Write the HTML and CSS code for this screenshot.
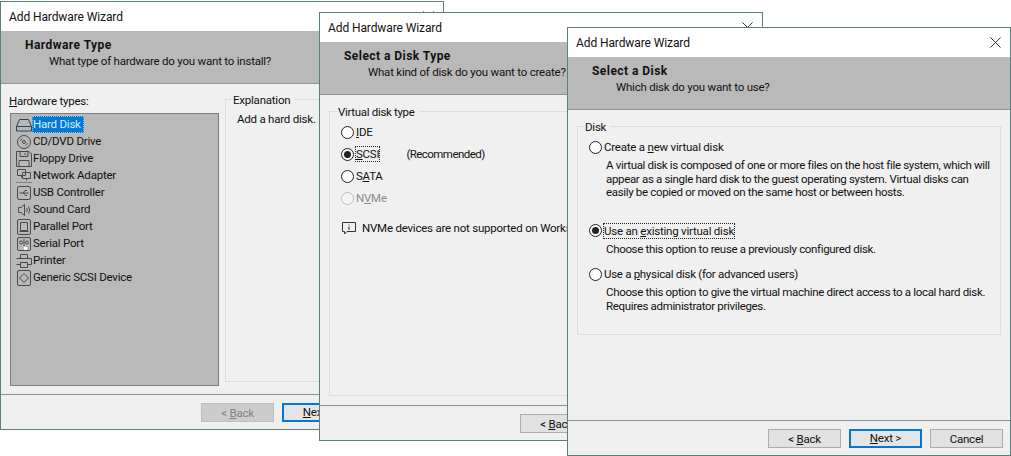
FILE: index.html
```html
<!DOCTYPE html>
<html lang="en">
<head>
<meta charset="utf-8">
<title>Add Hardware Wizard</title>
<link rel="stylesheet" href="styles.css">
</head>
<body>
<section class="window win-hardware">
  <header class="titlebar"><span>Add Hardware Wizard</span><svg class="close" viewBox="0 0 12 12"><path d="M.5.5l11 11M11.5.5l-11 11"/></svg></header>
  <div class="banner"><h1>Hardware Type</h1><p>What type of hardware do you want to install?</p></div>
  <main class="content hw-content">
    <div class="hw-left">
      <div class="list-label"><u>H</u>ardware types:</div>
      <ul class="hw-list">
        <li><svg class="disk-icon" viewBox="0 0 16 16"><path d="M3.500 2.500h9l3 7v4.500H.5v-4.500zM.5 9.500h15"/></svg><span class="selected">Hard Disk</span></li>
        <li><svg viewBox="0 0 16 16"><circle cx="8" cy="8" r="6.500"/><circle cx="8" cy="8" r="1.500"/><path d="M4.500 7a4 4 0 0 1 2-2.500M11.500 9a4 4 0 0 1-2 2.500"/></svg><span>CD/DVD Drive</span></li>
        <li><svg viewBox="0 0 16 16"><path d="M.5.5h12.500l2.500 2.500v12.500H.5zM4 .5v5h8v-5M9 2v2M3 15.500v-6h10v6"/></svg><span>Floppy Drive</span></li>
        <li><svg viewBox="0 0 16 16"><path d="M1.500 1.500h8v6h-8zM5.500 7.500v2M6.500 4.500h8v6h-8zM10.500 10.500v2"/><path class="dots" d="M.5 14.500h15"/></svg><span>Network Adapter</span></li>
        <li><svg viewBox="0 0 16 16"><rect x="1.500" y="1.500" width="13" height="13" rx="1.500"/><path d="M3.500 8h9M7 8l2-2.500h2M7.500 8l2 2.500h1.500"/></svg><span>USB Controller</span></li>
        <li><svg viewBox="0 0 16 16"><path d="M2.500 5.500h2.500l3.500-3v11l-3.500-3H2.500zM10.500 6a3 3 0 0 1 0 4M12.500 4.500a6 6 0 0 1 0 7"/></svg><span>Sound Card</span></li>
        <li><svg viewBox="0 0 16 16"><rect x="1.500" y=".5" width="13" height="15" rx="1.500"/><path d="M4.500 3.500h7v8h-7zM3.500 12.500h9"/></svg><span>Parallel Port</span></li>
        <li><svg viewBox="0 0 16 16"><rect x="1.500" y="1.500" width="13" height="13" rx="1.500"/><circle cx="5" cy="6.500" r="1.500"/><circle cx="11" cy="6.500" r="1.500"/><path d="M8 3v7"/><path class="spark" d="M8 11h3v3H8z"/></svg><span>Serial Port</span></li>
        <li><svg viewBox="0 0 16 16"><path d="M4.500 5.500v-4h7v4M.5 5.500h15v6h-4M4.500 11.500h-4M4.500 9.500h7v5h-7z"/></svg><span>Printer</span></li>
        <li><svg viewBox="0 0 16 16"><rect x="1.500" y=".5" width="13" height="15" rx="1.500"/><path d="M8 3.500l4.500 4.500-4.500 4.500-4.500-4.500z"/></svg><span>Generic SCSI Device</span></li>
      </ul>
    </div>
    <div class="group hw-group"><span class="legend">Explanation</span><p class="explain">Add a hard disk.</p></div>
  </main>
  <footer class="footer">
    <button class="btn" disabled>&lt; <u>B</u>ack</button>
    <button class="btn default"><u>N</u>ext &gt;</button>
    <button class="btn">Cancel</button>
  </footer>
</section>

<section class="window win-type">
  <header class="titlebar"><span>Add Hardware Wizard</span><svg class="close" viewBox="0 0 12 12"><path d="M.5.5l11 11M11.5.5l-11 11"/></svg></header>
  <div class="banner"><h1>Select a Disk Type</h1><p>What kind of disk do you want to create?</p></div>
  <main class="content type-content">
    <div class="group type-group">
      <span class="legend">Virtual disk type</span>
      <div class="type-row"><i class="radio"></i><span class="opt"><u>I</u>DE</span></div>
      <div class="type-row"><i class="radio on"></i><span class="opt focus"><u>S</u>CSI</span><span class="rec">(Recommended)</span></div>
      <div class="type-row"><i class="radio"></i><span class="opt">S<u>A</u>TA</span></div>
      <div class="type-row off"><i class="radio"></i><span class="opt">N<u>V</u>Me</span></div>
      <div class="note"><svg viewBox="0 0 14 13"><path d="M.5.5h13v9H5l-2.500 2.500v-2.500h-2zM7 2.500v1M7 4.500v3.500"/></svg><span>NVMe devices are not supported on Workstation 15.x virtual machines.</span></div>
    </div>
  </main>
  <footer class="footer">
    <button class="btn">&lt; <u>B</u>ack</button>
    <button class="btn default"><u>N</u>ext &gt;</button>
    <button class="btn">Cancel</button>
  </footer>
</section>

<section class="window win-disk">
  <header class="titlebar"><span>Add Hardware Wizard</span><svg class="close" viewBox="0 0 12 12"><path d="M.5.5l11 11M11.5.5l-11 11"/></svg></header>
  <div class="banner"><h1>Select a Disk</h1><p>Which disk do you want to use?</p></div>
  <main class="content disk-content">
    <div class="group disk-group">
      <span class="legend">Disk</span>
      <div class="disk-opt"><i class="radio"></i><span class="opt">Create a <u>n</u>ew virtual disk</span></div>
      <p class="desc d-new">A virtual disk is composed of one or more files on the host file system, which will<br>appear as a single hard disk to the guest operating system. Virtual disks can<br>easily be copied or moved on the same host or between hosts.</p>
      <div class="disk-opt"><i class="radio on"></i><span class="opt focus">Use an <u>e</u>xisting virtual disk</span></div>
      <p class="desc">Choose this option to reuse a previously configured disk.</p>
      <div class="disk-opt o-phys"><i class="radio"></i><span class="opt">Use a <u>p</u>hysical disk (for advanced users)</span></div>
      <p class="desc">Choose this option to give the virtual machine direct access to a local hard disk.<br>Requires administrator privileges.</p>
    </div>
  </main>
  <footer class="footer">
    <button class="btn">&lt; <u>B</u>ack</button>
    <button class="btn default"><u>N</u>ext &gt;</button>
    <button class="btn">Cancel</button>
  </footer>
</section>
</body>
</html>
```
FILE: styles.css
```css
* { box-sizing: border-box; }
html, body { margin: 0; padding: 0; }
body {
  position: relative;
  width: 1011px;
  height: 456px;
  overflow: hidden;
  background: #fff;
  font: 11.5px/16px Roboto, "Noto Sans", sans-serif;
  letter-spacing: -0.22px;
  color: #111;
}
.window {
  position: absolute;
  display: flex;
  flex-direction: column;
  overflow: hidden;
  background: #f0f0f0;
  border: 1px solid #5f8079;
}
.win-hardware { left: 0; top: 1px; width: 444px; height: 429px; z-index: 1; }
.win-type { left: 319px; top: 12px; width: 444px; height: 429px; z-index: 2; }
.win-disk { left: 567px; top: 27px; width: 444px; height: 429px; z-index: 3; }
.titlebar {
  flex: none;
  display: flex;
  align-items: center;
  justify-content: space-between;
  height: 29px;
  padding: 0 9px 0 8px;
  background: #fff;
  font-size: 12px;
  letter-spacing: -0.1px;
}
.close { width: 11px; height: 11px; fill: none; stroke: #222; stroke-width: 1; }
.banner {
  flex: none;
  height: 53px;
  padding: 6px 0 0 24px;
  background: #b9b9b9;
  border-bottom: 1px solid #8f9491;
}
.banner h1 { margin: 0; font-size: 12px; line-height: 16px; font-weight: 700; letter-spacing: 0.45px; }
.banner p { margin: 0 0 0 24px; line-height: 16px; }
.content { flex: 1; min-height: 0; position: relative; }
.footer {
  flex: none;
  display: flex;
  justify-content: flex-end;
  gap: 8px;
  height: 35px;
  padding: 8px 7px 0 0;
  border-top: 1px solid #8f9491;
}
.btn {
  width: 73px;
  height: 19px;
  padding: 1px 0 0;
  font: inherit;
  letter-spacing: inherit;
  line-height: 15px;
  color: #111;
  background: #e1e1e1;
  border: 1px solid #adadad;
}
.btn.default { border: 2px solid #0078d7; background: #e5e5e5; padding-top: 0; }
.btn:disabled { color: #838383; background: #ccc; border-color: #bfbfbf; }
.group { border: 1px solid #dcdcdc; position: relative; }
.legend {
  position: absolute;
  left: 7px;
  top: -8px;
  padding: 0 4px 0 0;
  background: #f0f0f0;
}
.radio {
  flex: none;
  display: block;
  position: relative;
  width: 13px;
  height: 13px;
  border: 1px solid #222;
  border-radius: 50%;
  background: #fff;
}
.radio.on::after {
  content: "";
  position: absolute;
  left: 2px;
  top: 2px;
  width: 7px;
  height: 7px;
  border-radius: 50%;
  background: #222;
}
.opt { padding: 0 1px; margin-left: -1px; }
.focus { outline: 1px dotted #222; outline-offset: -1px; }

.hw-content { display: flex; padding: 0 0 0 9px; }
.hw-left { width: 209px; flex: none; display: flex; flex-direction: column; padding-top: 9px; height: 302px; }
.list-label { height: 20px; margin-left: -1px; }
.hw-list {
  flex: 1;
  margin: 0;
  padding: 2px 0 0 5px;
  list-style: none;
  background: #b9b9b9;
  border: 1px solid #808080;
}
.hw-list li { display: flex; align-items: center; height: 17px; }
.hw-list svg {
  flex: none;
  width: 16px;
  height: 16px;
  fill: none;
  stroke: #4a4a4a;
  stroke-width: 1;
}
.hw-list .disk-icon { stroke: #2f4358; }
.hw-list .dots { stroke-dasharray: 1 1; }
.hw-list .spark { fill: #fff; stroke: none; }
.hw-list span { padding: 0 1px; line-height: 17px; }
.hw-list .selected { padding-right: 3px; background: #0078d7; color: #dfeefa; outline: 1px dotted #9cc; outline-offset: -1px; }
.hw-group { flex: none; width: 230px; height: 283px; margin: 15px 0 0 6px; }
.explain { margin: 11px 0 0 11px; }

.type-content { padding: 16px 10px 0 9px; }
.type-group { height: 285px; padding: 9px 0 0 11px; }
.type-group .legend { left: 8px; letter-spacing: -0.32px; }
.type-row { display: flex; align-items: center; gap: 2px; height: 22px; }
.type-row .rec { margin-left: 24px; letter-spacing: -0.55px; }
.type-row.off { color: #8a8a8a; }
.type-row.off .radio { border-color: #bdbdbd; background: #f4f4f4; }
.note { display: flex; align-items: center; gap: 6px; margin: 11px 0 0 1px; white-space: nowrap; }
.note svg { flex: none; width: 14px; height: 13px; fill: none; stroke: #333; stroke-width: 1; }

.disk-content { padding: 16px 9px 0 9px; }
.disk-group { height: 209px; padding: 12px 0 0 11px; }
.disk-opt { display: flex; align-items: center; gap: 2px; height: 16px; }
.desc { margin: 4px 0 0 17px; line-height: 13.500px; white-space: nowrap; letter-spacing: -0.33px; }
.d-new { margin-bottom: 23px; }
.o-phys { margin-top: 10px; letter-spacing: -0.3px; }
```
